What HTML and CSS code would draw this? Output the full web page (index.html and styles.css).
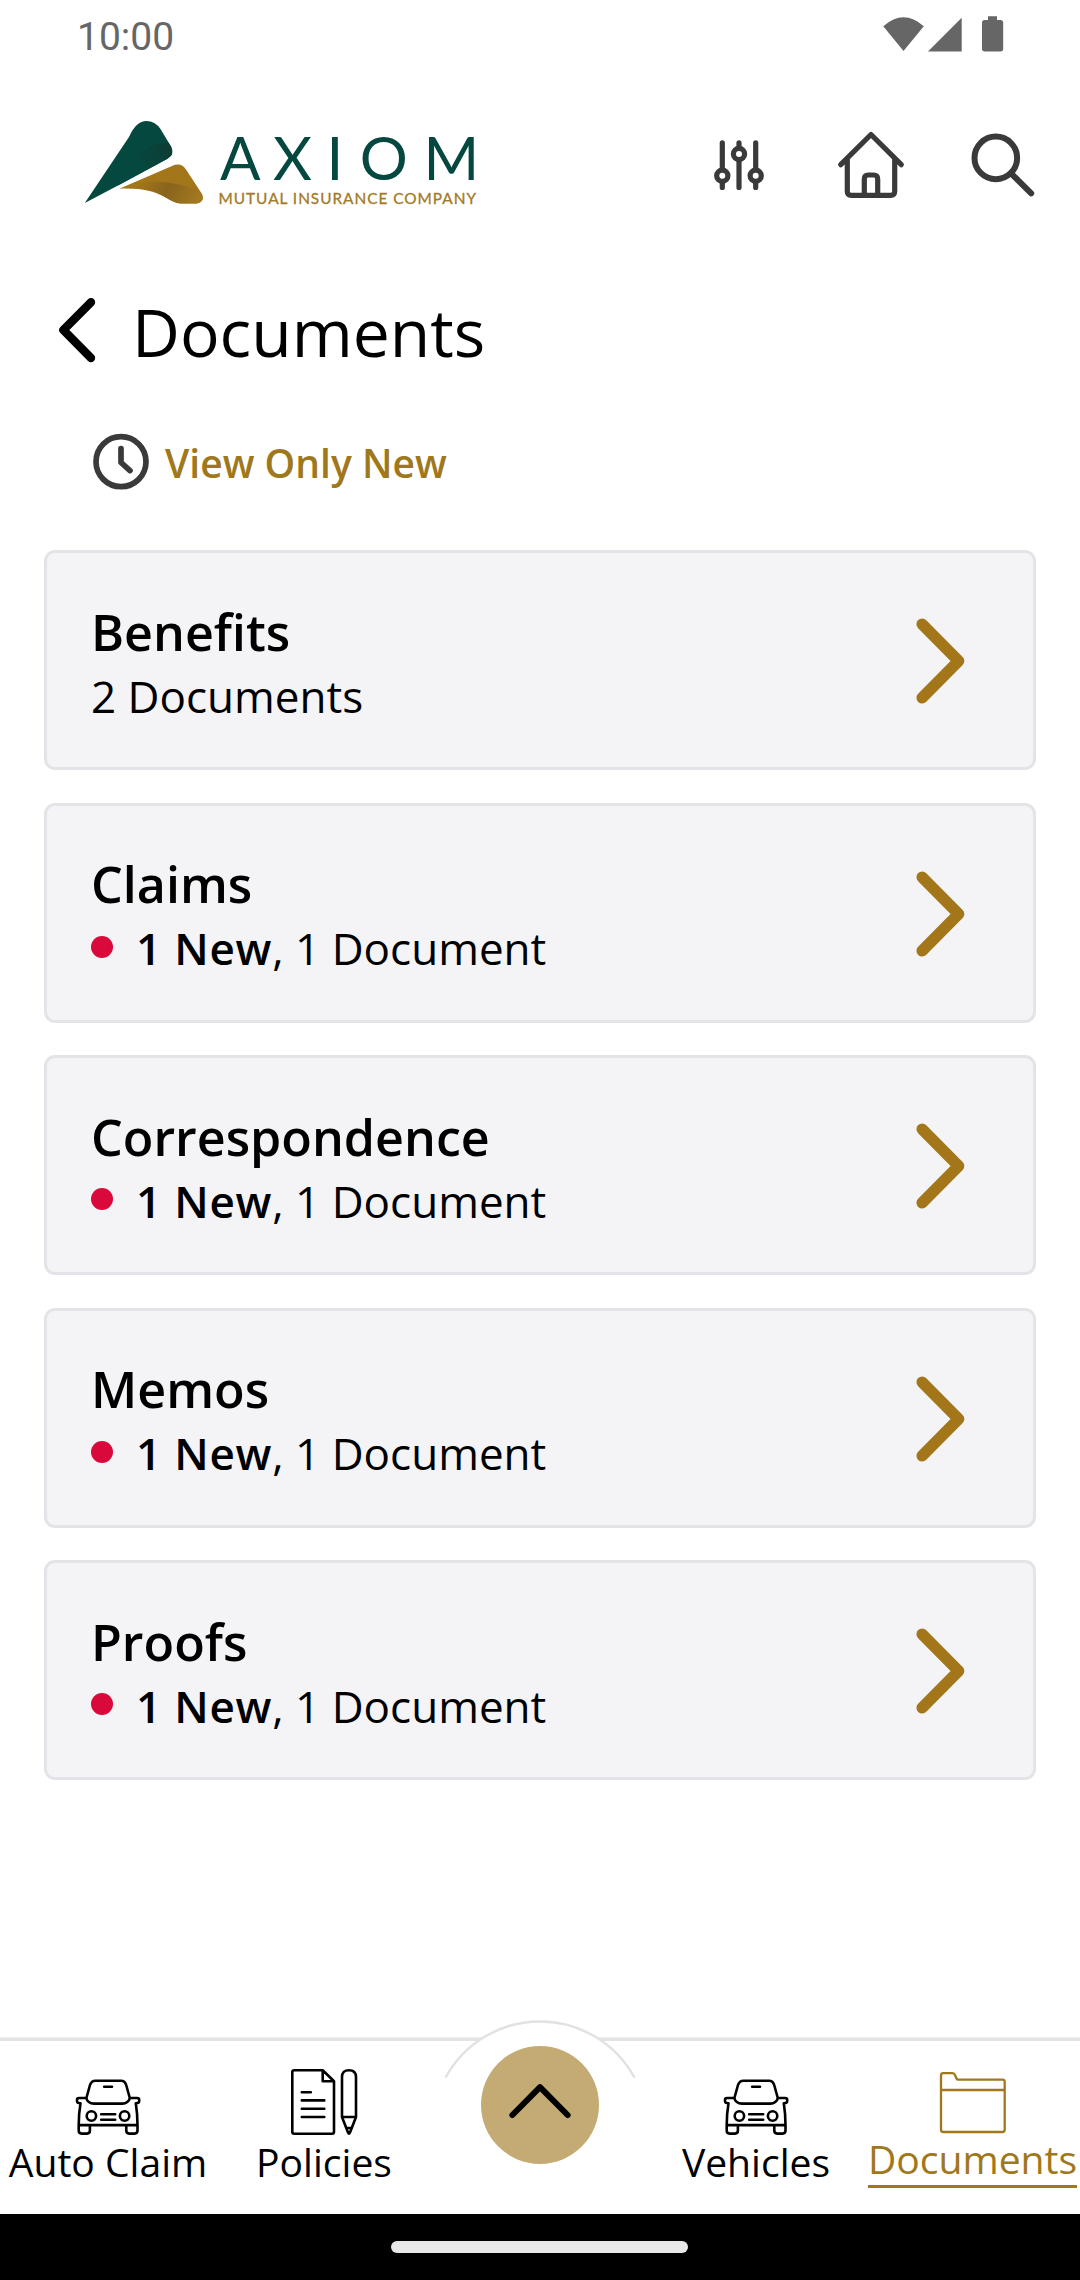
FILE: index.html
```html
<!DOCTYPE html>
<html lang="en">
<head>
<meta charset="utf-8">
<title>Documents</title>
<link rel="stylesheet" href="styles.css">
</head>
<body>
<svg class="defs" aria-hidden="true">
  <symbol id="car" viewBox="0 0 66 56">
    <path d="M11.4 19 15 6Q16.5 1.7 20.4 1.7H46Q50 1.7 51.2 6L54.8 19C54.4 22.2 51 24.6 47.4 24.6H19C15 24.6 11.8 22.2 11.4 19ZM29.2 7.7H37M11.4 19H4Q2 19 2 21V22Q2 24.2 5.5 24.2 3.7 35 3.7 46V51.6Q3.7 54.6 6.7 54.6H12Q14.9 54.6 14.9 51.6V46.5M54.8 19H62.2Q64.2 19 64.2 21V22Q64.2 24.2 60.8 24.2 62.5 35 62.5 46V51.6Q62.5 54.6 59.5 54.6H54.2Q51.3 54.6 51.3 51.6V46.5M3.7 46.1H62.5M26.2 35.3H40.2M26.2 40.7H40.2"/>
    <circle cx="16.4" cy="37" r="4.7"/><circle cx="49.6" cy="37" r="4.7"/>
  </symbol>
  <symbol id="chevron" viewBox="0 0 50 86">
    <path d="M6.2 6.2 42.6 43 6.2 79.8"/>
  </symbol>
</svg>

<div class="status">
  <span class="time">10:00</span>
  <svg class="status-icons" width="121" height="38" viewBox="0 0 121 38">
    <path d="M0.3 12.3Q20.5-5.7 40.8 12.3L20.5 37ZM45 37.5H78.7V3.7ZM105 2.2H114V6H117.5Q120.2 6 120.2 8.7V34.8Q120.2 37.5 117.5 37.5H101.7Q99 37.5 99 34.8V8.7Q99 6 101.7 6H105Z"/>
  </svg>
</div>

<header class="header">
  <svg class="logo" width="396" height="86" viewBox="0 0 396 86">
    <defs>
      <linearGradient id="fold" x1="1" y1="0" x2="0" y2=".5"><stop offset="0" stop-color="#0f3b33"/><stop offset=".7" stop-color="#04483f"/></linearGradient>
      <linearGradient id="gfold" x1="1" y1=".4" x2="0" y2=".2"><stop offset="0" stop-color="#a27820"/><stop offset=".5" stop-color="#88641d"/><stop offset="1" stop-color="#a3761a"/></linearGradient>
    </defs>
    <path fill="#04483f" d="M.8 83 45 17Q52 1 62.500 1 71 1 76.500 9L87 26.500Q91 34.500 83.500 38.800L34 65.500Z"/>
    <path fill="url(#fold)" d="M46 43Q60 24 84.500 22.500L87 26.500Q91 34.500 83.500 38.800L34 65.500Z"/>
    <path fill="#a3761a" d="M35.300 68.700 88 46Q97 42 102 49.500L118 74Q121 82 113 83.500H97C84 83 78 67 35.300 68.700Z"/>
    <path fill="url(#gfold)" d="M51 66Q60 61 80 62 106 65 118 74 121 82 113 83.500H97C84 83 78 69 51 68Z"/>
    <text class="brand" x="136 189 242.600 275.700 339.600" y="60">AXIOM</text>
    <text class="tagline" x="134.500" y="84" textLength="257.500">MUTUAL INSURANCE COMPANY</text>
  </svg>
  <nav class="tools">
    <svg width="50" height="72" viewBox="0 0 50 72">
      <path d="M8.300 15.800V60.400M25 15.800V60.400M41.700 15.800V60.400"/>
      <circle cx="8.300" cy="48.800" r="5.600"/><circle cx="25" cy="27" r="5.600"/><circle cx="41.700" cy="48.800" r="5.600"/>
    </svg>
    <svg width="66" height="72" viewBox="0 0 66 72">
      <path d="M2.700 37.700 33 7.500 63.300 37.700M9.300 32V64.300Q9.300 68.400 13.400 68.400H52.600Q56.700 68.400 56.700 64.300V32M26.300 68V52Q26.300 48 30.300 48H35.700Q39.700 48 39.700 52V68"/>
    </svg>
    <svg class="search" width="65" height="72" viewBox="0 0 65 72">
      <circle cx="24.800" cy="30.900" r="21.300"/><path d="M40.500 46.800 60.200 66.300"/>
    </svg>
  </nav>
</header>

<main class="main">
  <div class="title">
    <svg class="back" width="36" height="66" viewBox="0 0 36 66"><path d="M32 4.200 4.400 32 32 60"/></svg>
    <h1>Documents</h1>
  </div>
  <div class="filter">
    <svg width="56" height="57" viewBox="0 0 56 57"><circle cx="28" cy="28.700" r="25"/><path d="M28 15.500V29.500L37 37.600"/></svg>
    <span>View Only New</span>
  </div>
  <section class="list">
    <article class="card">
      <div><h2>Benefits</h2><p>2 Documents</p></div>
      <svg class="go"><use href="#chevron"/></svg>
    </article>
    <article class="card">
      <div><h2>Claims</h2><p><i class="dot"></i><span><b>1 New</b>, 1 Document</span></p></div>
      <svg class="go"><use href="#chevron"/></svg>
    </article>
    <article class="card">
      <div><h2>Correspondence</h2><p><i class="dot"></i><span><b>1 New</b>, 1 Document</span></p></div>
      <svg class="go"><use href="#chevron"/></svg>
    </article>
    <article class="card">
      <div><h2>Memos</h2><p><i class="dot"></i><span><b>1 New</b>, 1 Document</span></p></div>
      <svg class="go"><use href="#chevron"/></svg>
    </article>
    <article class="card">
      <div><h2>Proofs</h2><p><i class="dot"></i><span><b>1 New</b>, 1 Document</span></p></div>
      <svg class="go"><use href="#chevron"/></svg>
    </article>
  </section>
</main>

<nav class="tabs">
  <a class="tab"><svg width="66" height="56"><use href="#car"/></svg><span>Auto Claim</span></a>
  <a class="tab">
    <svg width="67" height="66" viewBox="0 0 67 66"><path d="M31.700 1.200H3.300Q1.300 1.200 1.300 3.200V62.700Q1.300 64.700 3.300 64.700H41Q43 64.700 43 62.700V12.300ZV12.300H43M10.800 23.300H19.800M10.800 31.400H33.300M10.800 39.700H33.300M10.800 48H33.300M51 48V8Q51 1.200 58 1.200 65 1.200 65 8V48L59 63.500Q58 65.700 57 63.500ZH65M55.500 59H60.500"/></svg>
    <span>Policies</span>
  </a>
  <a class="more">
    <svg width="192" height="146" viewBox="0 0 192 146">
      <path class="arc" d="M1.600 57.500A107.500 107.500 0 0 1 190.400 57.500"/>
      <circle cx="96" cy="84.900" r="59"/>
      <path class="up" d="M68.400 95 96 67.200 123.600 95"/>
    </svg>
  </a>
  <a class="tab"><svg width="66" height="56"><use href="#car"/></svg><span>Vehicles</span></a>
  <a class="tab active">
    <svg width="68" height="62" viewBox="0 0 68 62"><path d="M2 19V4.500Q2 2.200 4.300 2.200H13.500Q15.300 2.200 16 4L17.500 7.500Q18 8.700 19.500 8.700H63.400Q65.700 8.700 65.700 11V58.700Q65.700 61 63.400 61H4.300Q2 61 2 58.700ZH65.700"/></svg>
    <span>Documents</span>
  </a>
</nav>
<div class="gesture"><span></span></div>
</body>
</html>
```
FILE: styles.css
```css
* { box-sizing: border-box; }

body {
  margin: 0;
  width: 1080px;
  height: 2280px;
  display: flex;
  flex-direction: column;
  background: #fff;
  color: #000;
  font-family: "Open Sans", "Noto Sans", sans-serif;
  overflow: hidden;
}

h1, h2, p { margin: 0; }

svg {
  display: block;
  flex: none;
  overflow: visible;
  fill: none;
  stroke-linecap: round;
  stroke-linejoin: round;
}

symbol { overflow: visible; }

.defs { position: absolute; width: 0; height: 0; }

.status {
  height: 72px;
  padding: 14px 76px 0 77px;
  display: flex;
  justify-content: space-between;
  align-items: flex-start;
}

.time {
  font: 39px/46px Roboto, sans-serif;
  color: #666;
}

.status-icons { fill: #666; }

.header {
  display: flex;
  align-items: center;
  justify-content: space-between;
  height: 134px;
  padding: 48px 44px 0 84px;
}

.brand { font: 60px Lato, sans-serif; fill: #04483f; }
.tagline { font: 15.4px Lato, sans-serif; fill: #a37a26; stroke: #a37a26; stroke-width: .3; }

.tools {
  display: flex;
  gap: 74px;
}

.tools svg { stroke: #3a3a3a; stroke-width: 5.2; }
.tools circle { fill: #fff; }
.tools .search { margin-left: -7px; stroke-width: 6; }

.main { padding: 80px 44px 0; }

.title {
  display: flex;
  align-items: center;
  gap: 37px;
  padding-left: 15px;
}

.title h1 { font-size: 66px; line-height: 90px; font-weight: 400; }

.back { stroke: #000; stroke-width: 8.4; }

.filter {
  margin-top: 57px;
  padding-left: 49px;
  height: 57px;
  display: flex;
  align-items: center;
  gap: 16px;
  font-size: 39px;
  line-height: 53px;
  font-weight: 600;
  color: #a0781c;
}

.filter span { padding-top: 1px; }
.filter svg { stroke: #3a3a3a; stroke-width: 5.7; }

.list {
  margin-top: 60px;
  display: grid;
  gap: 32.5px;
}

.card {
  height: 220px;
  padding: 3px 67px 0 44px;
  border: 3px solid #e4e4e8;
  border-radius: 11px;
  background: #f4f4f7;
  display: flex;
  align-items: center;
  justify-content: space-between;
}

.card h2 { font-size: 50.2px; line-height: 68px; font-weight: 600; }

.card p {
  display: flex;
  align-items: center;
  gap: 23px;
  font-size: 44px;
  line-height: 60px;
}

.card b { font-weight: 600; letter-spacing: .8px; }

.dot {
  width: 22px;
  height: 22px;
  margin-top: -3px;
  border-radius: 50%;
  background: #d90a3b;
}

.go {
  width: 50px;
  height: 86px;
  margin-top: -1px;
  stroke: #a3761a;
  stroke-width: 11.5;
}

.tabs {
  margin-top: auto;
  height: 176px;
  display: grid;
  grid-template-columns: repeat(5, 216px);
  border-top: 3px solid #e4e4e4;
  box-shadow: 0 -1px 1px #f0f0f0;
}

.tab {
  display: flex;
  flex-direction: column;
  align-items: center;
  justify-content: flex-end;
  padding-bottom: 25px;
  font-size: 39.1px;
  line-height: 54px;
  white-space: nowrap;
}

.tab svg { stroke: #000; stroke-width: 2.6; }

.tab.active { padding: 0 0 26px 1px; line-height: 52px; color: #a0781c; }
.tab.active svg { stroke: #a0781c; stroke-width: 2.3; }
.tab.active span { border-bottom: 3px solid #a0781c; }

.more {
  display: flex;
  justify-content: center;
  margin-top: -21px;
}

.more circle { fill: #c4ab73; }
.arc { fill: #fff; stroke: #e2e2e2; stroke-width: 2.6; stroke-linecap: butt; }
.up { stroke: #000; stroke-width: 6; }

.gesture {
  height: 66px;
  background: #000;
  display: flex;
  justify-content: center;
  padding: 27px 2px 0 0;
}

.gesture span { width: 297px; height: 12px; border-radius: 6px; background: #e8e8e8; }
```
